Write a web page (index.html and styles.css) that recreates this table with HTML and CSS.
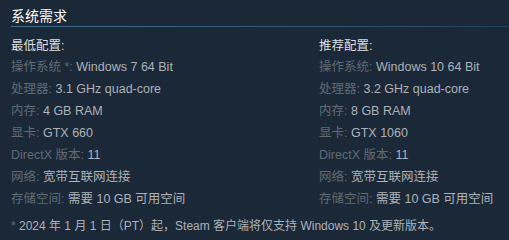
FILE: index.html
```html
<!DOCTYPE html>
<html lang="zh-CN">
<head>
<meta charset="utf-8">
<link rel="stylesheet" href="styles.css">
</head>
<body>
<div class="sysreq">
  <h2 class="title">系统需求</h2>
  <div class="cols">
    <div class="col">
      <div class="head">最低配置:</div>
      <ul class="list">
        <li><span class="lab">操作系统 *:</span> Windows 7 64 Bit</li>
        <li><span class="lab">处理器:</span> 3.1 GHz quad-core</li>
        <li><span class="lab">内存:</span> 4 GB RAM</li>
        <li><span class="lab">显卡:</span> GTX 660</li>
        <li><span class="lab">DirectX 版本:</span> 11</li>
        <li><span class="lab">网络:</span> 宽带互联网连接</li>
        <li><span class="lab">存储空间:</span> 需要 10 GB 可用空间</li>
      </ul>
    </div>
    <div class="col">
      <div class="head">推荐配置:</div>
      <ul class="list">
        <li><span class="lab">操作系统:</span> Windows 10 64 Bit</li>
        <li><span class="lab">处理器:</span> 3.2 GHz quad-core</li>
        <li><span class="lab">内存:</span> 8 GB RAM</li>
        <li><span class="lab">显卡:</span> GTX 1060</li>
        <li><span class="lab">DirectX 版本:</span> 11</li>
        <li><span class="lab">网络:</span> 宽带互联网连接</li>
        <li><span class="lab">存储空间:</span> 需要 10 GB 可用空间</li>
      </ul>
    </div>
  </div>
  <p class="note"><span class="lab">*</span> 2024 年 1 月 1 日（PT）起，Steam 客户端将仅支持 Windows 10 及更新版本。</p>
</div>
</body>
</html>
```
FILE: styles.css
```css
html, body {
  margin: 0;
  padding: 0;
  background: #1b2838;
  width: 509px;
  height: 240px;
  overflow: hidden;
}
body {
  font-family: "Liberation Sans", Arial, "Noto Sans CJK SC", sans-serif;
  font-size: 12.5px;
  color: #acb2b8;
}
.sysreq {
  padding: 6px 0 0 11px;
}
.title {
  margin: 0;
  font-size: 14px;
  font-weight: normal;
  color: #ffffff;
  line-height: 20px;
  border-bottom: 1px solid transparent;
  border-image: linear-gradient(to right, #3d6c8d 0%, #2e5470 70%, #23405a 100%) 1;
}
.cols {
  display: grid;
  grid-template-columns: 308px 1fr;
  margin-top: 9px;
}
.head {
  color: #dcdedf;
  line-height: 20px;
}
.list {
  list-style: none;
  margin: 0;
  padding: 0;
}
.list li {
  line-height: 22px;
  white-space: nowrap;
}
.lab {
  color: #5f6b76;
}
.note {
  margin: 6px 0 0;
  font-size: 12px;
  line-height: 20px;
}
```
